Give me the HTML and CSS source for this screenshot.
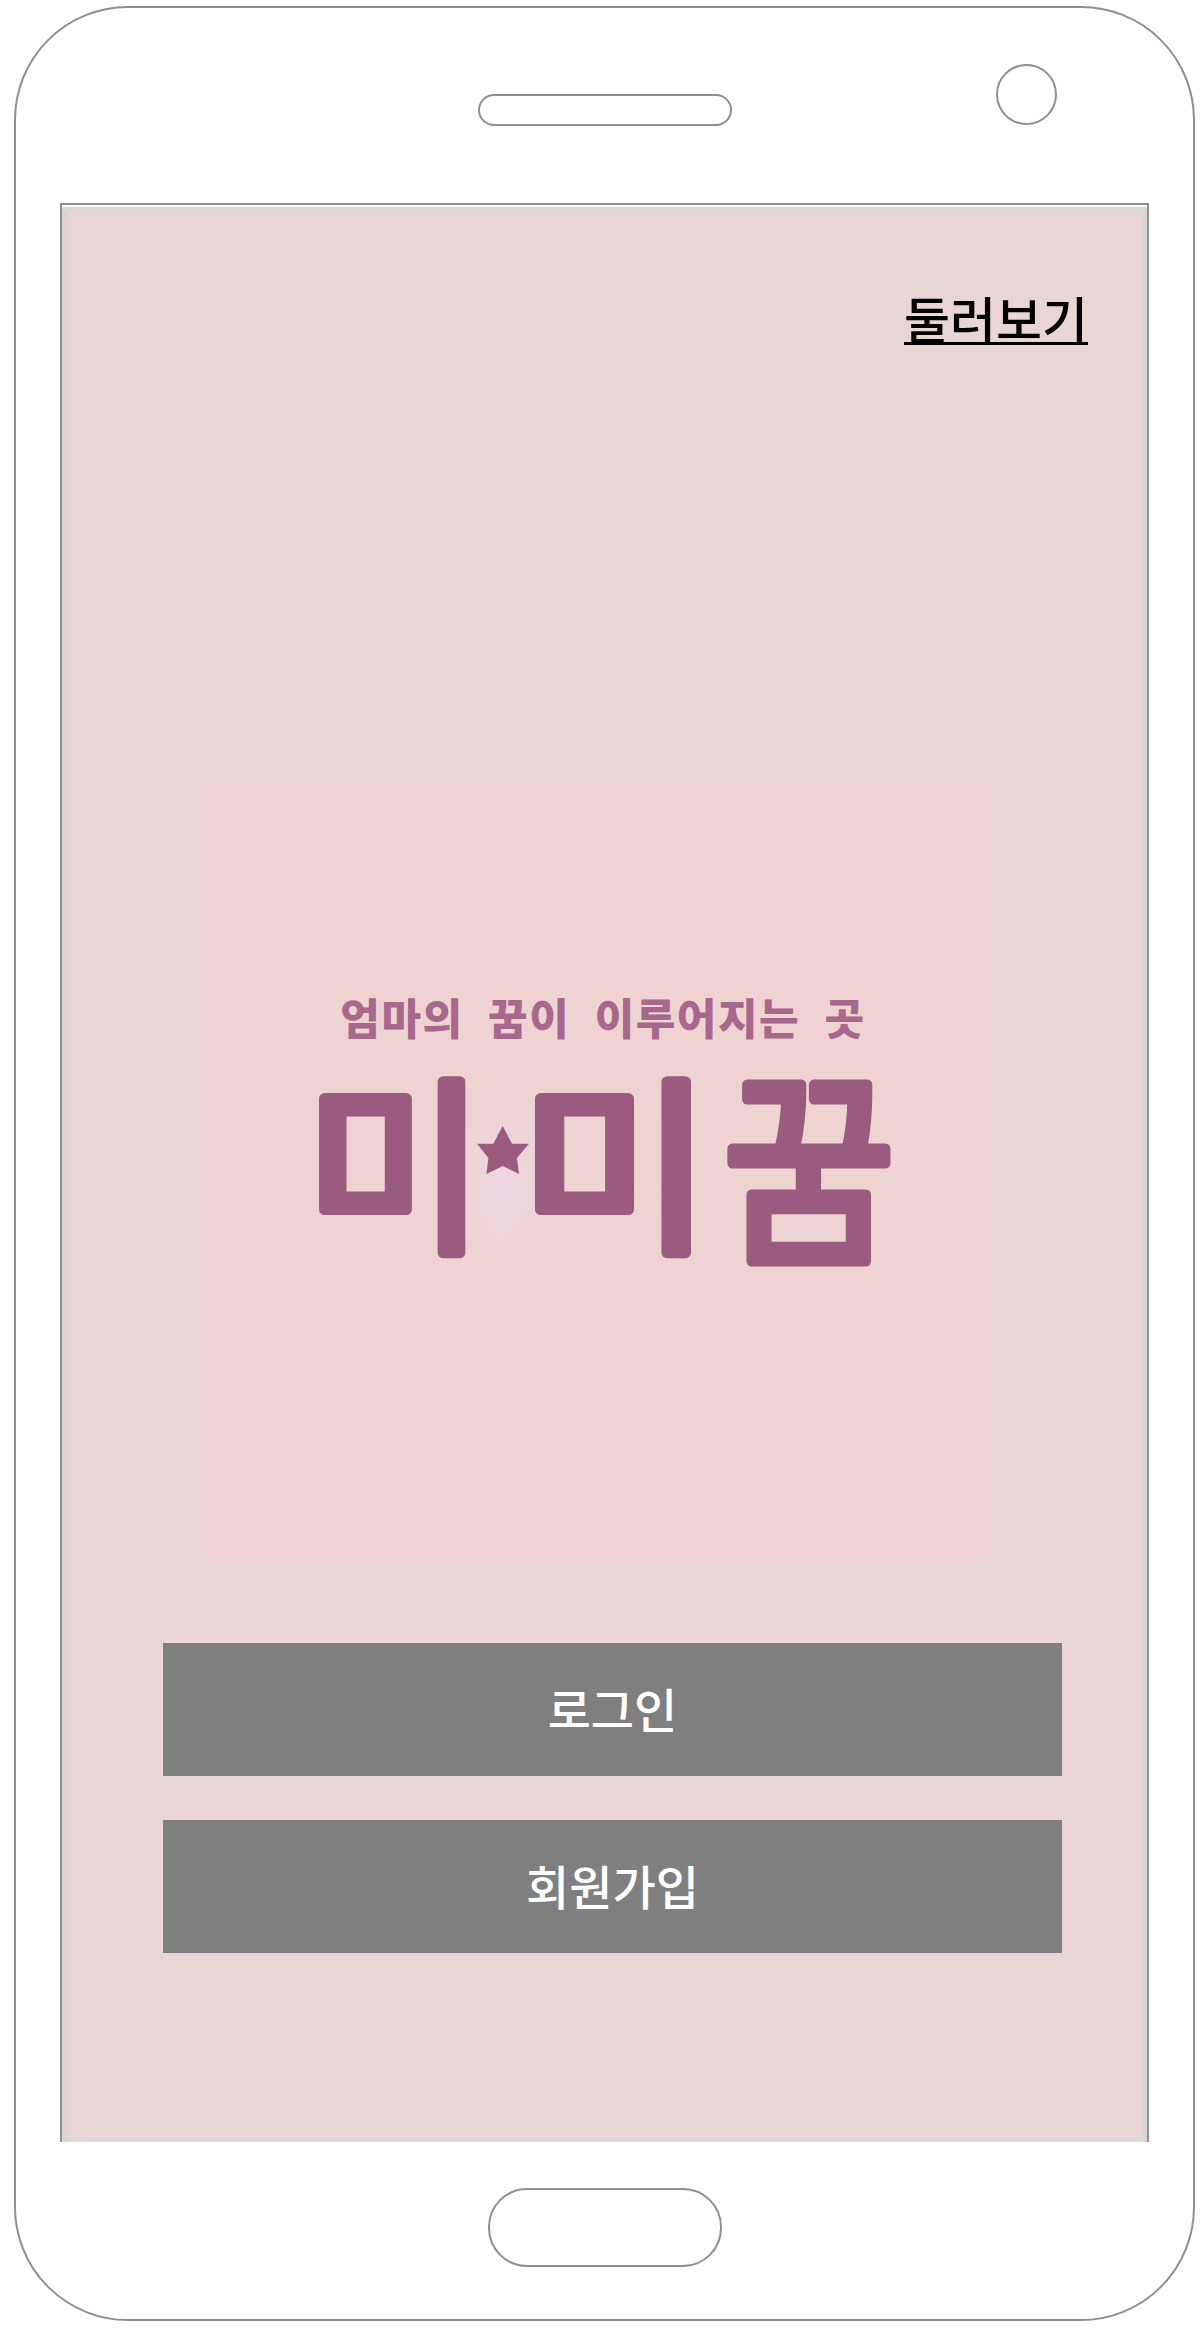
FILE: index.html
```html
<!DOCTYPE html>
<html lang="ko">
<head>
  <meta charset="UTF-8"/>
  <meta name="viewport" content="width=device-width, initial-scale=1.0"/>
  <title>미미꿈</title>
  <link rel="stylesheet" href="styles.css">
</head>
<body>
  <div class="phone">
    <div class="phone-top">
      <div class="speaker"></div>
      <div class="camera"></div>
    </div>

    <div class="screen">
      <div class="view">
        <div class="browse-row">
          <a class="browse" href="#">둘러보기</a>
        </div>

        <div class="logo">
          <p class="slogan">엄마의 꿈이 이루어지는 곳</p>
          <svg class="brand" viewBox="0 0 788 230">
            <defs>
              <radialGradient id="glow">
                <stop offset="0" stop-color="#edd6e3"/>
                <stop offset="1" stop-color="#edd6e3" stop-opacity="0"/>
              </radialGradient>
            </defs>
            <ellipse class="glow" cx="302" cy="130" rx="42" ry="95"/>
            <text x="105" y="182" textLength="180" lengthAdjust="spacingAndGlyphs">미</text>
            <polygon transform="translate(277 71)" points="25.7,0 35,17.7 52,17.7 40,32 42,48 25.7,40 9.4,48 11.4,32 0,17.7 16.3,17.7"/>
            <text x="320" y="182" textLength="192" lengthAdjust="spacingAndGlyphs">미</text>
            <text class="brand-kkum" x="523" y="192" textLength="172" lengthAdjust="spacingAndGlyphs">꿈</text>
          </svg>
        </div>

        <div class="buttons">
          <button class="btn">로그인</button>
          <button class="btn">회원가입</button>
        </div>
      </div>
    </div>

    <div class="phone-bottom">
      <div class="home"></div>
    </div>
  </div>
</body>
</html>
```

FILE: styles.css
```css
* {
  box-sizing: border-box;
}

body {
  margin: 0;
  background: #fff;
  font-family: "Noto Sans CJK KR", "Noto Sans", sans-serif;
}

.phone {
  width: 1181px;
  height: 2315px;
  margin: 6px 0 0 14px;
  border: 2px solid #8f8f8f;
  border-radius: 114px;
  display: flex;
  flex-direction: column;
}

.phone-top {
  height: 195px;
  display: flex;
  align-items: flex-start;
  padding-left: 462px;
}

.speaker {
  width: 254px;
  height: 32px;
  margin-top: 86px;
  border: 2px solid #8f8f8f;
  border-radius: 16px;
}

.camera {
  width: 61px;
  height: 61px;
  margin: 56px 0 0 264px;
  border: 2px solid #8f8f8f;
  border-radius: 50%;
}

.screen {
  width: 1089px;
  height: 1939px;
  margin-left: 44px;
  border: 2px solid #8f8f8f;
  border-bottom: 0;
  padding-top: 2px;
}

.view {
  height: 100%;
  background: #e8d5d4;
  border-top: 7px solid #dcd9d6;
  border-left: 6px solid #dbd6d4;
  border-right: 5px solid #dbd6d4;
  border-bottom: 5px solid #dcd9d6;
  display: flex;
  flex-direction: column;
}

.browse-row {
  height: 567px;
  padding: 71px 54px 0 0;
  display: flex;
  justify-content: flex-end;
  align-items: flex-start;
}

.browse {
  font-size: 50px;
  line-height: 64px;
  font-weight: 500;
  color: #000;
  text-decoration: underline;
  text-decoration-thickness: 3px;
  text-decoration-skip-ink: none;
  text-underline-offset: 3px;
}

.logo {
  width: 788px;
  height: 779px;
  margin-left: 132px;
  padding-top: 211px;
  background: #efd3d3;
  box-shadow: 0 0 8px 4px #ead7d2;
}

.slogan {
  margin: 0;
  padding-left: 18px;
  font-size: 43px;
  line-height: 48px;
  font-weight: 900;
  letter-spacing: 1.5px;
  word-spacing: 11px;
  text-align: center;
  color: #a8688b;
  white-space: nowrap;
}

.brand {
  display: block;
  width: 788px;
  height: 230px;
  margin-top: 15px;
  fill: #9a5b7f;
  overflow: visible;
}

.brand .glow {
  fill: url(#glow);
}

.brand text {
  font-size: 188px;
  font-weight: 400;
  stroke: #9a5b7f;
  stroke-width: 11px;
  stroke-linejoin: round;
}

.brand .brand-kkum {
  font-size: 207px;
}

.buttons {
  margin: 83px 0 0 95px;
  display: flex;
  flex-direction: column;
  gap: 44px;
}

.btn {
  width: 899px;
  height: 133px;
  padding: 0 0 5px;
  border: 0;
  background: #7f7f7f;
  color: #fff;
  font-family: inherit;
  font-size: 47px;
  font-weight: 500;
}

.phone-bottom {
  padding: 46px 0 0 472px;
}

.home {
  width: 234px;
  height: 79px;
  border: 2px solid #8f8f8f;
  border-radius: 39px;
}
```
